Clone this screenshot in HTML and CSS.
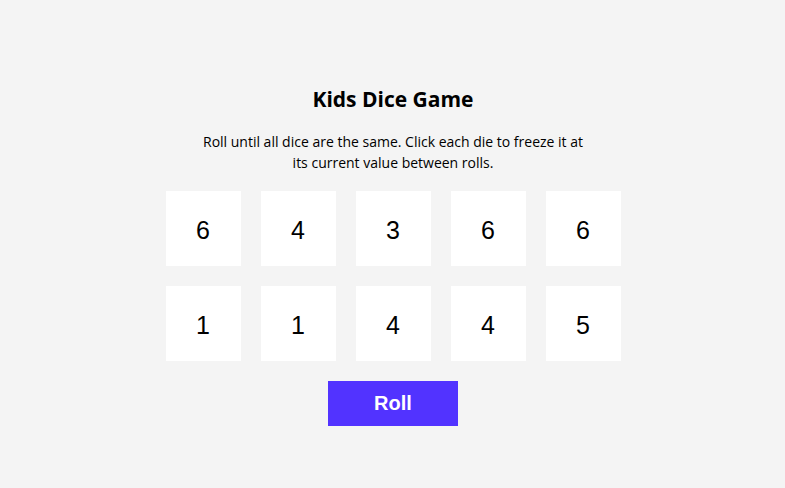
FILE: index.html
```html
<!DOCTYPE html>
<html>
<head>
<meta charset="utf-8">
<link rel="stylesheet" href="styles.css">
</head>
<body>
<main class="game">
  <h1 class="title">Kids Dice Game</h1>
  <p class="intro">Roll until all dice are the same. Click each die to freeze it at its current value between rolls.</p>
  <div class="dice">
    <button class="die">6</button>
    <button class="die">4</button>
    <button class="die">3</button>
    <button class="die">6</button>
    <button class="die">6</button>
    <button class="die">1</button>
    <button class="die">1</button>
    <button class="die">4</button>
    <button class="die">4</button>
    <button class="die">5</button>
  </div>
  <button class="roll">Roll</button>
</main>
</body>
</html>
```
FILE: styles.css
```css
html, body {
  margin: 0;
  padding: 0;
  background: #f4f4f4;
}
body {
  font-family: "Open Sans", "Noto Sans", sans-serif;
  color: #000;
}
.game {
  width: 455px;
  margin: 0 auto;
  padding: 84px 0 0 1px;
  display: flex;
  flex-direction: column;
  align-items: center;
}
.title {
  margin: 0;
  font-size: 21px;
  line-height: 30px;
  font-weight: 700;
}
.intro {
  margin: 17px 0 0;
  width: 392px;
  font-size: 14px;
  line-height: 21px;
  text-align: center;
}
.dice {
  margin-top: 18px;
  display: grid;
  grid-template-columns: repeat(5, 75px);
  grid-auto-rows: 75px;
  gap: 20px;
}
.die {
  border: 0;
  padding: 3px 0 0;
  margin: 0;
  background: #fff;
  font-family: "Liberation Sans", Arial, sans-serif;
  font-size: 25px;
  color: #000;
}
.roll {
  margin-top: 20px;
  width: 130px;
  height: 45px;
  border: 0;
  padding: 0;
  background: #5233ff;
  color: #fff;
  font-family: "Liberation Sans", Arial, sans-serif;
  font-weight: 700;
  font-size: 20px;
}
```
